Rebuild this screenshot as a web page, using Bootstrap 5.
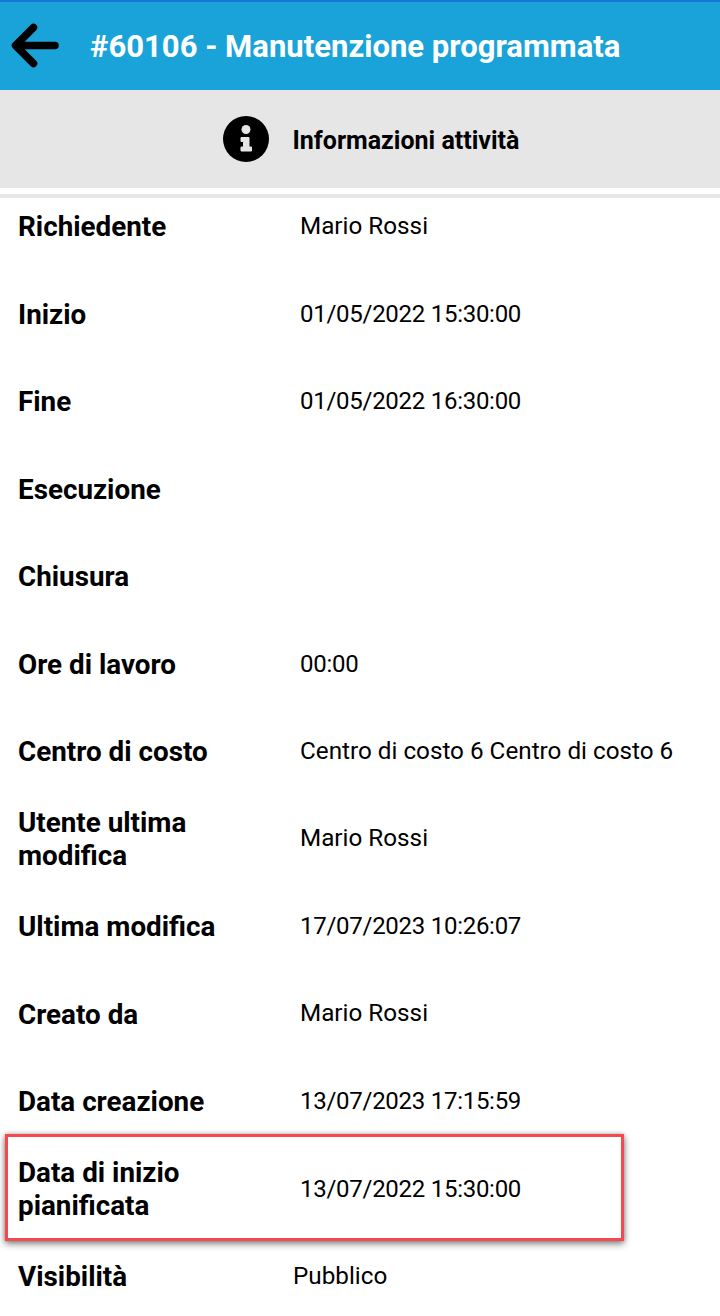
<!DOCTYPE html>
<html lang="it">
<head>
  <meta charset="UTF-8">
  <title>Informazioni attività</title>
  <meta name="viewport" content="width=device-width, initial-scale=1">
  <link href="https://cdn.jsdelivr.net/npm/bootstrap@5.3.0/dist/css/bootstrap.min.css" rel="stylesheet">
  <script src="https://cdn.jsdelivr.net/npm/bootstrap@5.3.0/dist/js/bootstrap.bundle.min.js"></script>
  <style>
    body {
      font-family: Roboto, sans-serif;
      color: #000;
      height: 1316px;
      overflow: hidden;
    }
    .top-bar {
      height: 90px;
      background: #1aa3d9;
      border-top: 2px solid #1976d2;
    }
    .back-icon {
      margin-left: 11px;
      margin-right: 31px;
    }
    .top-title {
      font-size: 31.05px;
      font-weight: 700;
      color: #fff;
      padding-top: 3px;
    }
    .section-bar {
      height: 98px;
      background: #e6e6e6;
      margin-bottom: 6px;
      padding-left: 22px;
    }
    .section-title {
      font-size: 25px;
      font-weight: 700;
      padding-top: 3px;
    }
    .info-list {
      border-top: 4px solid #e6e6e6;
    }
    .info-row {
      height: 87.5px;
      padding-left: 18px;
    }
    .info-row.first-row {
      height: 71.75px;
      padding-bottom: 15.75px;
    }
    .info-label {
      width: 282px;
      font-size: 27.8px;
      font-weight: 700;
      line-height: 33px;
      padding-top: 1px;
    }
    .info-value {
      font-size: 24.25px;
    }
    .date-value {
      font-size: 24px;
      letter-spacing: -.27px;
    }
    .visibility-value {
      margin-left: -7px;
    }
    .highlight-box {
      position: absolute;
      left: 5px;
      top: 1134px;
      width: 619px;
      height: 107px;
      border: 3px solid #f44a4f;
      box-shadow: 0 3px 7px rgba(0, 0, 0, .45), 0 0 4px rgba(0, 0, 0, .25);
    }
  </style>
</head>
<body>

<div class="top-bar d-flex align-items-center">
  <svg class="back-icon" width="48" height="48" viewBox="0 0 48 48" fill="none" stroke="#000" stroke-width="7.500" stroke-linecap="round" stroke-linejoin="round">
    <path d="M44 23.500H6M22.500 5.500L4.500 23.500L22.500 41.500"/>
  </svg>
  <span class="top-title">#60106 - Manutenzione programmata</span>
</div>

<div class="section-bar d-flex align-items-center justify-content-center">
  <svg class="me-4" width="46" height="46" viewBox="0 0 46 46">
    <circle cx="23" cy="23" r="23" fill="#000"/>
    <circle cx="23" cy="13.500" r="4.500" fill="#e6e6e6"/>
    <path d="M18 21.500H26V31H28.500V35H18V31H20.500V25.500H18Z" fill="#e6e6e6" stroke="#e6e6e6" stroke-linejoin="round"/>
  </svg>
  <span class="section-title">Informazioni attività</span>
</div>

<div class="info-list">
  <div class="info-row first-row d-flex align-items-center">
    <div class="info-label">Richiedente</div>
    <div class="info-value">Mario Rossi</div>
  </div>
  <div class="info-row d-flex align-items-center">
    <div class="info-label">Inizio</div>
    <div class="info-value date-value">01/05/2022 15:30:00</div>
  </div>
  <div class="info-row d-flex align-items-center">
    <div class="info-label">Fine</div>
    <div class="info-value date-value">01/05/2022 16:30:00</div>
  </div>
  <div class="info-row d-flex align-items-center">
    <div class="info-label">Esecuzione</div>
  </div>
  <div class="info-row d-flex align-items-center">
    <div class="info-label">Chiusura</div>
  </div>
  <div class="info-row d-flex align-items-center">
    <div class="info-label">Ore di lavoro</div>
    <div class="info-value date-value">00:00</div>
  </div>
  <div class="info-row d-flex align-items-center">
    <div class="info-label">Centro di costo</div>
    <div class="info-value">Centro di costo 6 Centro di costo 6</div>
  </div>
  <div class="info-row d-flex align-items-center">
    <div class="info-label">Utente ultima<br>modifica</div>
    <div class="info-value">Mario Rossi</div>
  </div>
  <div class="info-row d-flex align-items-center">
    <div class="info-label">Ultima modifica</div>
    <div class="info-value date-value">17/07/2023 10:26:07</div>
  </div>
  <div class="info-row d-flex align-items-center">
    <div class="info-label">Creato da</div>
    <div class="info-value">Mario Rossi</div>
  </div>
  <div class="info-row d-flex align-items-center">
    <div class="info-label">Data creazione</div>
    <div class="info-value date-value">13/07/2023 17:15:59</div>
  </div>
  <div class="info-row d-flex align-items-center">
    <div class="info-label">Data di inizio<br>pianificata</div>
    <div class="info-value date-value">13/07/2022 15:30:00</div>
  </div>
  <div class="info-row d-flex align-items-center">
    <div class="info-label">Visibilità</div>
    <div class="info-value visibility-value">Pubblico</div>
  </div>
</div>

<div class="highlight-box"></div>

</body>
</html>
